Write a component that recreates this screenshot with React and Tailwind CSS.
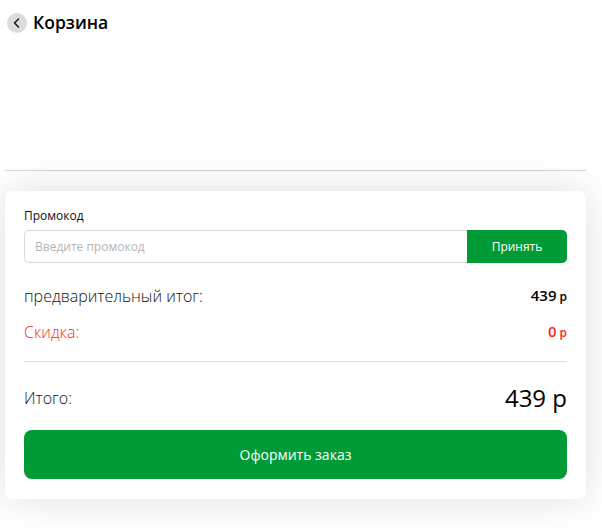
export default function App() {
  return (
    <div className="w-[602px] h-[528px] bg-white overflow-hidden" style={{ fontFamily: '"Open Sans", sans-serif' }}>
      {/* Header */}
      <div className="flex items-center h-[44px] pl-[7px] pt-[1px]">
        <button className="w-[20px] h-[20px] rounded-full bg-[#dcdcdc] flex items-center justify-center">
          <svg width="12" height="12" viewBox="0 0 12 12" fill="none">
            <path d="M7.5 2L3.5 6l4 4" stroke="#1a1a1a" strokeWidth="1.6" strokeLinecap="round" strokeLinejoin="round" />
          </svg>
        </button>
        <h1 className="ml-[6px] text-[17.5px] font-semibold text-black leading-none">Корзина</h1>
      </div>

      <div className="h-[126px]" />
      <div className="mx-[5px] w-[581px] h-px bg-[#d6d6d6]" />

      {/* Card */}
      <div className="mt-[20px] ml-[5px] w-[581px] bg-white rounded-[7px] shadow-[0_0_40px_rgba(0,0,0,0.13)] px-[19px] pt-[19px] pb-[20px]">
        <div className="h-[12px] text-[12px] leading-[12px] text-[#111] font-medium">Промокод</div>
        <div className="flex mt-[8px] h-[33px]">
          <input
            className="flex-1 border border-[#d9d9d9] border-r-0 rounded-l-[5px] px-[10px] text-[12px] text-[#333] placeholder-[#b5b5b5] outline-none"
            placeholder="Введите промокод"
          />
          <button className="w-[100px] bg-[#009b36] text-white text-[12px] font-medium rounded-r-[5px]">Принять</button>
        </div>

        <div className="flex justify-between items-center mt-[23px] h-[20px]">
          <span className="text-[16px] font-light text-[#111] leading-[20px]">предварительный итог:</span>
          <span className="text-black font-semibold leading-[20px]">
            <span className="text-[15px]">439</span>
            <span className="text-[12px] ml-[3px]">р</span>
          </span>
        </div>
        <div className="flex justify-between items-center mt-[16px] h-[20px]">
          <span className="text-[16px] font-light text-[#ff1f1f] leading-[20px]">Скидка:</span>
          <span className="text-[#ff1f1f] font-semibold leading-[20px]">
            <span className="text-[15px]">0</span>
            <span className="text-[12px] ml-[3px]">р</span>
          </span>
        </div>

        <div className="h-px bg-[#dedede] mt-[19px]" />

        <div className="flex justify-between items-center mt-[22px] h-[28px]">
          <span className="text-[16px] font-light text-[#111] leading-[28px]">Итого:</span>
          <span className="text-[24px] text-black font-medium leading-[28px]">439 р</span>
        </div>

        <button className="mt-[18px] w-full h-[49px] bg-[#009b36] rounded-[8px] text-white text-[14px] font-medium">
          Оформить заказ
        </button>
      </div>
    </div>
  );
}
